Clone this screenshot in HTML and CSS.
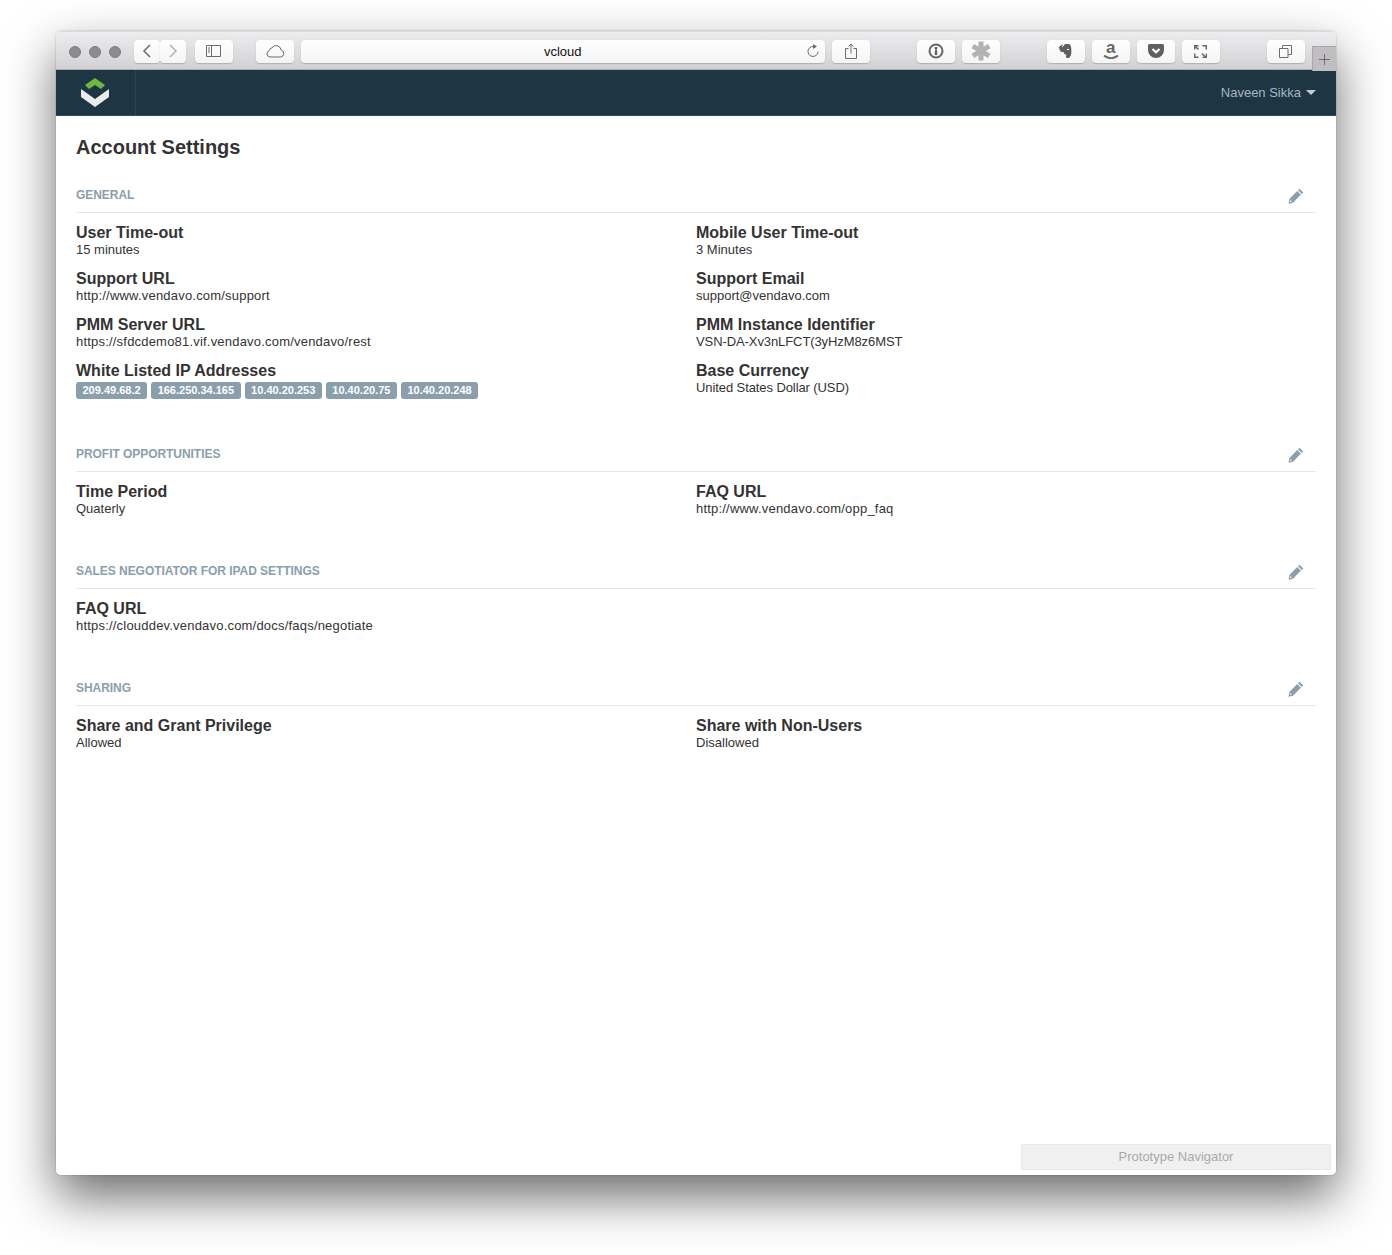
FILE: index.html
```html
<!DOCTYPE html>
<html lang="en">
<head>
<meta charset="utf-8">
<title>vcloud</title>
<link rel="stylesheet" href="styles.css">
</head>
<body>
<div class="window">
  <div class="toolbar">
    <div class="dots"><span class="dot"></span><span class="dot"></span><span class="dot"></span></div>
    <div class="btn nav-btn ml-13"><svg width="12" height="16" viewBox="0 0 12 16"><path d="M9 2 3 8l6 6" class="st dark"/></svg></div>
    <div class="btn nav-btn"><svg width="12" height="16" viewBox="0 0 12 16"><path d="m3 2 6 6-6 6" class="st light"/></svg></div>
    <div class="btn ml-9"><svg width="16" height="13" viewBox="0 0 16 13"><path d="M.5.5h14v11H.5zM5.5.5v11" class="st thin"/><path d="M2 3h2M2 5h2M2 7h2" class="st thin"/></svg></div>
    <div class="btn ml-23"><svg width="20" height="14" viewBox="0 0 20 14"><path d="M5 13h10.500a3.500 3.500 0 0 0 .6-6.900A5 5 0 0 0 7 3.800 2.800 2.800 0 0 0 4.500 6.500 3.300 3.300 0 0 0 5 13z" class="st thin"/></svg></div>
    <div class="url ml-7">vcloud<svg class="reload" width="14" height="14" viewBox="0 0 14 14"><path d="M7.500 2.500A5 5 0 1 0 12 7.500" class="st thin"/><path d="M7 0l4 2.500L7 5z" class="fill-mid"/></svg></div>
    <div class="btn ml-7"><svg width="12" height="16" viewBox="0 0 12 16"><path d="M3.500 5.500H.5v10h11v-10h-3M6 10.500V1M3.500 3.500 6 1l2.500 2.500" class="st thin"/></svg></div>
    <div class="btn ml-47"><svg width="16" height="16" viewBox="0 0 16 16"><circle cx="8" cy="8" r="6.500" class="st heavy"/><path d="M6.800 4h2.400v2l-.5.500v1l.5.500v4H6.800V8l.5-.5v-1l-.5-.5z" class="fill-dark"/></svg></div>
    <div class="btn ml-7"><svg width="22" height="22" viewBox="0 0 22 22"><path d="M11 1.500v19M2.800 6.200l16.400 9.600M2.800 15.800l16.400-9.600" class="st star"/></svg></div>
    <div class="btn ml-47"><svg width="13" height="14" viewBox="0 0 13 14"><path d="M0 3 3 .5 4.500 2 6 0h4c1.200.5 1.800 1.500 2 3 .5 3 .6 6 0 8-.4 1.500-1.500 3-3 3H7.500L6.800 12.500 7.500 11 5.500 10 4.500 8H2.500C1 7.500.3 5.500 0 3z" class="fill-dark"/><path d="M8 5.500h2M4 1.500 3 3" class="st notch"/></svg></div>
    <div class="btn ml-7 amazon"><span class="amazon-a">a</span><svg class="smile" width="16" height="4" viewBox="0 0 16 4"><path d="M1 .5c4 3.500 10 3.500 14 0" class="st heavy"/></svg></div>
    <div class="btn ml-7"><svg width="16" height="14" viewBox="0 0 16 14"><path d="M1.500 0h13A1.500 1.500 0 0 1 16 1.500V6A8 8 0 0 1 0 6V1.500A1.500 1.500 0 0 1 1.500 0z" class="fill-dark"/><path d="m4.500 5 3.500 3.300L11.500 5" class="st knock"/></svg></div>
    <div class="btn ml-7"><svg width="13" height="13" viewBox="0 0 13 13"><path d="M.7 4.500V.7h3.800M8.500.7h3.800v3.800M.7 8.500v3.800h3.800" class="st fs"/><path d="m1 1 3.500 3.500M8 8.500l4 4M12.500 8.500v4h-4" class="st fs"/></svg></div>
    <div class="btn ml-47"><svg width="13" height="13" viewBox="0 0 13 13"><path d="M.5 3.500h8.500v9H.5z" class="st thin"/><path d="M3.500 3.500v-3h9v9H9" class="st thin"/></svg></div>
    <div class="plus ml-7"><svg width="13" height="13" viewBox="0 0 13 13"><path d="M6.500 1v11M1 6.500h11" class="st thin"/></svg></div>
  </div>
  <header class="navbar">
    <div class="brand">
      <svg class="logo" width="28" height="29" viewBox="0 0 28 29"><path d="M14 0l10 7-4 4-6-4-6 4-4-4z" class="logo-green"/><path d="M0 11l14 10 14-10v8L14 29 0 19z" class="logo-white"/></svg>
    </div>
    <div class="user">Naveen Sikka<span class="caret"></span></div>
  </header>
  <main class="content">
    <h1 class="title">Account Settings</h1>

    <section class="section">
      <div class="section-head"><h2 class="section-name">General</h2><svg class="pencil" width="16" height="16" viewBox="0 0 16 16"><path d="M11.500.8 15.200 4.500l-1.500 1.500L10 2.300zM9.200 3.100l3.700 3.700-7.900 7.900-4.500 1 .9-4.600zM2.300 11.900l-.4 2.200 2.100-.5z" class="fill-pencil"/></svg></div>
      <div class="grid">
        <div class="item"><div class="label">User Time-out</div><div class="value">15 minutes</div></div>
        <div class="item"><div class="label">Mobile User Time-out</div><div class="value">3 Minutes</div></div>
        <div class="item"><div class="label">Support URL</div><div class="value link">http://www.vendavo.com/support</div></div>
        <div class="item"><div class="label">Support Email</div><div class="value">support@vendavo.com</div></div>
        <div class="item"><div class="label">PMM Server URL</div><div class="value link">https://sfdcdemo81.vif.vendavo.com/vendavo/rest</div></div>
        <div class="item"><div class="label">PMM Instance Identifier</div><div class="value tight">VSN-DA-Xv3nLFCT(3yHzM8z6MST</div></div>
        <div class="item tall"><div class="label">White Listed IP Addresses</div>
          <div class="badges"><span class="badge">209.49.68.2</span><span class="badge">166.250.34.165</span><span class="badge">10.40.20.253</span><span class="badge">10.40.20.75</span><span class="badge">10.40.20.248</span></div>
        </div>
        <div class="item tall"><div class="label">Base Currency</div><div class="value tight">United States Dollar (USD)</div></div>
      </div>
    </section>

    <section class="section">
      <div class="section-head"><h2 class="section-name">Profit Opportunities</h2><svg class="pencil" width="16" height="16" viewBox="0 0 16 16"><path d="M11.500.8 15.200 4.500l-1.500 1.500L10 2.300zM9.200 3.100l3.700 3.700-7.900 7.900-4.500 1 .9-4.600zM2.300 11.900l-.4 2.200 2.100-.5z" class="fill-pencil"/></svg></div>
      <div class="grid">
        <div class="item"><div class="label">Time Period</div><div class="value">Quaterly</div></div>
        <div class="item"><div class="label">FAQ URL</div><div class="value link">http://www.vendavo.com/opp_faq</div></div>
      </div>
    </section>

    <section class="section">
      <div class="section-head"><h2 class="section-name">Sales Negotiator for iPad Settings</h2><svg class="pencil" width="16" height="16" viewBox="0 0 16 16"><path d="M11.500.8 15.200 4.500l-1.500 1.500L10 2.300zM9.200 3.100l3.700 3.700-7.900 7.900-4.500 1 .9-4.600zM2.300 11.900l-.4 2.200 2.100-.5z" class="fill-pencil"/></svg></div>
      <div class="grid">
        <div class="item"><div class="label">FAQ URL</div><div class="value link">https://clouddev.vendavo.com/docs/faqs/negotiate</div></div>
      </div>
    </section>

    <section class="section">
      <div class="section-head"><h2 class="section-name">Sharing</h2><svg class="pencil" width="16" height="16" viewBox="0 0 16 16"><path d="M11.500.8 15.200 4.500l-1.500 1.500L10 2.300zM9.200 3.100l3.700 3.700-7.900 7.900-4.500 1 .9-4.600zM2.300 11.900l-.4 2.200 2.100-.5z" class="fill-pencil"/></svg></div>
      <div class="grid">
        <div class="item"><div class="label">Share and Grant Privilege</div><div class="value">Allowed</div></div>
        <div class="item"><div class="label">Share with Non-Users</div><div class="value">Disallowed</div></div>
      </div>
    </section>
    <div class="proto">Prototype Navigator</div>
  </main>
</div>
</body>
</html>
```
FILE: styles.css
```css
* { box-sizing: border-box; }
html, body { margin: 0; height: 100%; background: #fff; overflow: hidden; }
body { padding: 31px 56px 80px; font-family: "Liberation Sans", Arial, sans-serif; color: #333; }

.window {
  width: 1280px; height: 1144px; border-radius: 5px; overflow: hidden; background: #fff;
  display: flex; flex-direction: column; position: relative;
}
body::before {
  content: ""; position: absolute; left: 56px; top: 31px; width: 1280px; height: 1144px;
  border-radius: 5px; box-shadow: 0 22px 50px rgba(0,0,0,.58), 0 0 2px rgba(0,0,0,.25);
}

.toolbar {
  height: 39px; flex: none; display: flex; align-items: flex-start; padding: 9px 0 0 13px;
  background: linear-gradient(#edecee, #d2d0d2); border-bottom: 1px solid #aeacae; border-top: 1px solid #dcdadc;
  position: relative;
}
.toolbar > * { margin-top: -1px; }
.dots { display: flex; gap: 8px; width: 52px; height: 23px; align-items: center; }
.dot { width: 12px; height: 12px; border-radius: 50%; background: #8c8b8d; border: 1px solid #7f7e80; }
.btn {
  width: 37.500px; height: 22.500px; flex: none; display: flex; align-items: center; justify-content: center;
  background: linear-gradient(#fff, #f5f4f5); border-radius: 4px; box-shadow: 0 1px 1px rgba(0,0,0,.16), 0 0 1px rgba(0,0,0,.12);
  position: relative; margin-right: .5px;
}
.nav-btn { width: 25.500px; }
.url {
  width: 523.500px; height: 22.500px; flex: none; display: flex; align-items: center; justify-content: center;
  background: linear-gradient(#fff, #f5f4f5); border-radius: 4px; box-shadow: 0 1px 1px rgba(0,0,0,.16), 0 0 1px rgba(0,0,0,.12);
  font-size: 13px; color: #111; position: relative; margin-right: .5px;
}
.reload { position: absolute; right: 5px; top: 4px; }
.plus {
  width: 24px; height: 25px; flex: none; margin-top: 5px; display: flex; align-items: center; justify-content: center;
  background: #c0bec0; border: 1px solid #a8a6a8; border-right: 0; border-bottom: 0;
}
.ml-7 { margin-left: 7px; }
.ml-9 { margin-left: 9px; }
.ml-13 { margin-left: 13px; }
.ml-23 { margin-left: 23px; }
.ml-47 { margin-left: 47px; }

.st { fill: none; stroke: #6c6b6d; stroke-width: 1; }
.dark { stroke: #6a696b; stroke-width: 1.500; }
.light { stroke: #b4b3b5; stroke-width: 1.500; }
.heavy { stroke: #666; stroke-width: 2; }
.star { stroke: #b3b2b3; stroke-width: 5; }
.notch { stroke: #fff; stroke-width: 1; }
.knock { stroke: #fff; stroke-width: 2.200; }
.fs { stroke: #666; stroke-width: 1.500; }
.fill-mid { fill: #6c6b6d; }
.fill-dark { fill: #5f5e60; }
.fill-pencil { fill: #8a9eac; fill-rule: evenodd; }
.amazon { flex-direction: column; }
.amazon-a { font-size: 17px; font-weight: 700; line-height: 14px; color: #666; margin-top: -3px; }
.smile { display: block; margin-top: 0; }

.navbar {
  height: 46px; flex: none; display: flex; align-items: center; justify-content: space-between;
  background: #1e3644; border-bottom: 1px solid #27505f;
}
.brand {
  width: 80px; height: 100%; display: flex; align-items: center; justify-content: center;
  border-right: 1px solid #2b4553;
}
.logo { margin-right: 2px; }
.logo-green { fill: #6fb73f; }
.logo-white { fill: #e9ebed; }
.user { font-size: 13px; color: #a8b7c1; padding-right: 20px; display: flex; align-items: center; }
.caret {
  width: 0; height: 0; margin-left: 5px; border-left: 5px solid transparent; border-right: 5px solid transparent;
  border-top: 5px solid #c0ccd4;
}

.content { flex: 1; padding: 20px 20px 0; position: relative; }
.title { margin: 0 0 19px; font-size: 20px; line-height: 22px; font-weight: 700; color: #333; }
.section { margin-bottom: 25px; }
.section-head {
  height: 36px; display: flex; align-items: center; justify-content: space-between;
  border-bottom: 1px solid #e6e6e6;
}
.section-name { margin: 2px 0 0; font-size: 12px; line-height: 33px; font-weight: 700; color: #8a9eac; text-transform: uppercase; letter-spacing: -.05px; }
.pencil { margin: 2px 12px 0 0; }
.grid { display: grid; grid-template-columns: 620px 620px; margin-top: 10px; }
.item { height: 46px; }
.item.tall { height: 50px; }
.label { font-size: 16px; line-height: 19px; font-weight: 700; color: #333; }
.value { font-size: 13px; line-height: 15px; color: #333; }
.link { letter-spacing: .2px; }
.tight { letter-spacing: -.09px; }
.badges { display: flex; gap: 4px; margin-top: 2px; }
.badge {
  height: 17px; padding: 0 6.500px; border-radius: 3px; background: #8a9eac; color: #fff;
  font-size: 11px; line-height: 17px; font-weight: 700;
}
.proto {
  position: absolute; right: 5px; bottom: 5px; width: 310px; height: 26px; background: #f0f0f0; border: 1px solid #e8e8e8;
  font-size: 13px; line-height: 24px; color: #aaa; text-align: center;
}
```
